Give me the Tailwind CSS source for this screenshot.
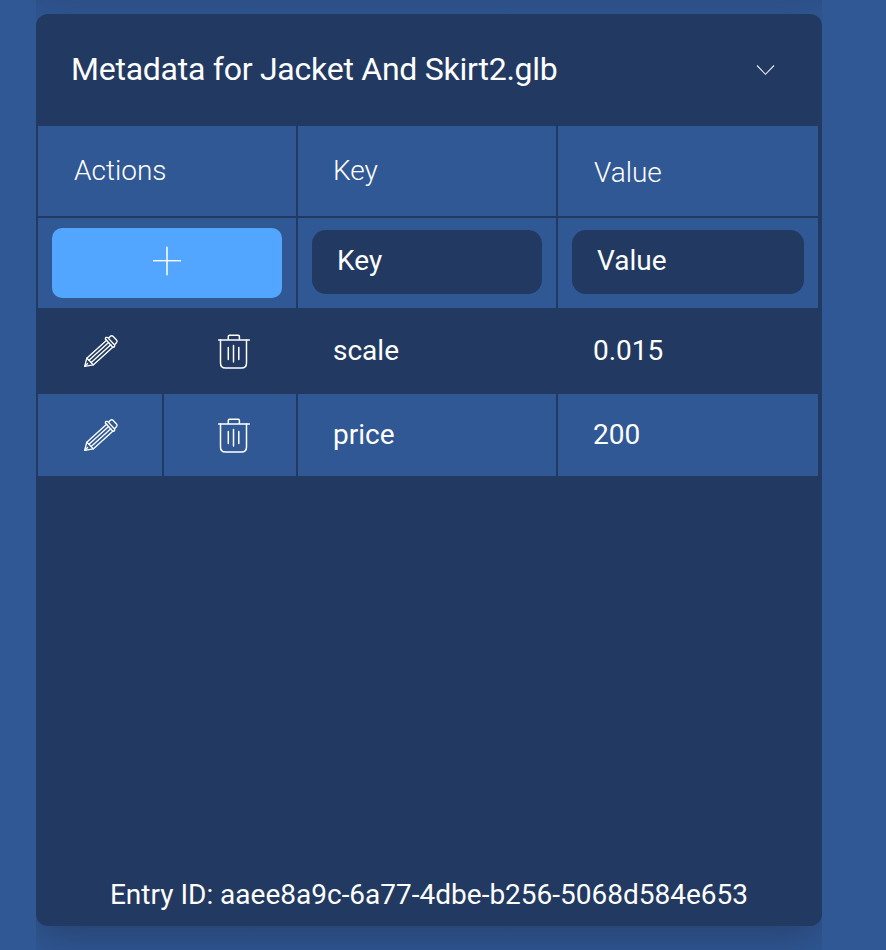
<!DOCTYPE html>
<html lang="en">
<head>
<meta charset="utf-8">
<title>Metadata</title>
<script src="https://cdn.jsdelivr.net/npm/@tailwindcss/browser@4"></script>
</head>
<body class="h-[950px] w-[886px] overflow-hidden bg-[#305894] font-['Roboto',sans-serif] text-[28px] leading-8 text-white">
<svg class="hidden">
  <symbol id="pencil" viewBox="0 0 36 36">
    <g fill="none" stroke="#fff" stroke-width="1.35" stroke-linejoin="round" stroke-linecap="round">
      <path d="M23.6 7.2 L3.8 25.2 L1.7 33.3 L10.2 31.9 L30 13.9"/>
      <path d="M3.8 25.2 L6 27.2 L8.2 29.6 L10.2 31.9 M1.7 33.3 L4.6 30.4"/>
      <path d="M6 27.2 L25.6 9.4 M8.2 29.6 L27.8 11.8"/>
      <path d="M22.3 6 Q22.6 3.6 24.8 4.6 L31.6 12 Q32.2 14.4 29.8 14.3 Z"/>
      <path d="M25.8 4.9 L27.6 3.1 Q28.8 2.2 30 3.3 L33.7 7.2 Q34.5 8.6 33.6 9.6 L31.8 11.4"/>
    </g>
  </symbol>
  <symbol id="trash" viewBox="0 0 34 36">
    <g fill="none" stroke="#fff" stroke-width="1.5" stroke-linecap="round" stroke-linejoin="round">
      <path d="M1.6 6 H32.4 M11.3 6 V2.5 Q11.3 1.3 12.5 1.3 H21.2 Q22.4 1.3 22.4 2.5 V6"/>
      <path d="M3.5 6 V29 Q3.5 34 8.5 34 H24.5 Q29.5 34 29.5 29 V6"/>
      <path d="M11.3 13.5 V25.5 M16.5 11.5 V28 M21.8 13.5 V25.5"/>
    </g>
  </symbol>
</svg>
<div class="flex h-[950px] pl-9">
  <div class="h-[950px] w-[786px] overflow-hidden bg-linear-to-b from-[#2e528b] to-[#305894] to-[14px] pt-3.5">
    <main class="flex h-[912px] flex-col rounded-xl bg-[#223962] shadow-[0_12px_40px_rgba(30,45,80,0.5)]">
      <header class="flex h-28 shrink-0 items-center justify-between pr-[47px] pl-[35px]">
        <h1 class="pb-0.5 text-[32px] leading-10 font-normal tracking-[-0.25px] whitespace-nowrap">Metadata for Jacket And Skirt2.glb</h1>
        <svg class="h-3 w-[19px]" viewBox="0 0 19 12" fill="none" stroke="#e8ecf3" stroke-width="1.1"><path d="M1 1.5 L9.5 10.3 L18 1.5"/></svg>
      </header>
      <section class="grid w-[782px] grid-cols-[124px_132px_258px_260px] gap-x-0.5 pl-0.5">
        <div class="col-span-2 h-[90px] bg-[#305894] pt-[29px] pl-9 font-light">Actions</div>
        <div class="h-[90px] bg-[#305894] pt-[29px] pl-[35px] font-light">Key</div>
        <div class="h-[90px] bg-[#305894] pt-[31px] pl-9 font-light">Value</div>

        <div class="col-span-2 mt-0.5 h-[90px] bg-[#305894] px-3.5 pt-2.5">
          <button class="flex h-[70px] w-full items-center justify-center rounded-[10px] bg-[#52a6ff] pb-1">
            <svg class="h-[30px] w-[30px]" viewBox="0 0 30 30" stroke="#fff" fill="none"><path stroke-width="1.8" stroke-opacity=".85" d="M15 .8V29.2"/><path stroke-width="1.4" d="M1 14.7H29"/></svg>
          </button>
        </div>
        <div class="mt-0.5 h-[90px] bg-[#305894] px-3.5 pt-3"><div class="h-16 rounded-[14px] bg-[#223962] pt-[15px] pl-[25px]">Key</div></div>
        <div class="mt-0.5 h-[90px] bg-[#305894] px-3.5 pt-3"><div class="h-16 rounded-[14px] bg-[#223962] pt-[15px] pl-[25px]">Value</div></div>

        <div class="h-[86px] pt-[25px] pl-[45px]"><svg class="h-9 w-9"><use href="#pencil"/></svg></div>
        <div class="h-[86px] pt-[26px] pl-[53px]"><svg class="h-9 w-[34px]"><use href="#trash"/></svg></div>
        <div class="h-[86px] pt-[27px] pl-[35px]">scale</div>
        <div class="h-[86px] pt-[27px] pl-[35px]">0.015</div>

        <div class="h-[82px] bg-[#305894] pt-[23px] pl-[45px]"><svg class="h-9 w-9"><use href="#pencil"/></svg></div>
        <div class="h-[82px] bg-[#305894] pt-6 pl-[53px]"><svg class="h-9 w-[34px]"><use href="#trash"/></svg></div>
        <div class="h-[82px] bg-[#305894] pt-[25px] pl-[35px]">price</div>
        <div class="h-[82px] bg-[#305894] pt-[25px] pl-[35px]">200</div>
      </section>
      <footer class="mt-auto pb-[15px] text-center whitespace-nowrap">Entry ID: aaee8a9c-6a77-4dbe-b256-5068d584e653</footer>
    </main>
  </div>
</div>
</body>
</html>
